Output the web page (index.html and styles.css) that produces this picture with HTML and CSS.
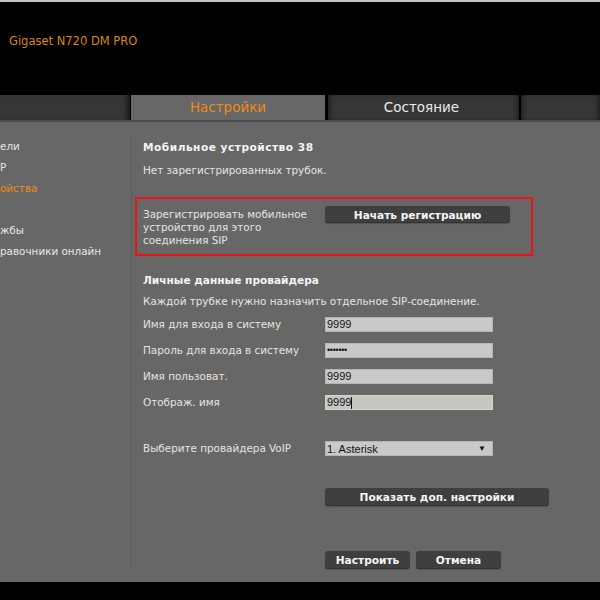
FILE: index.html
```html
<!DOCTYPE html>
<html lang="ru">
<head>
<meta charset="utf-8">
<title>Gigaset N720 DM PRO</title>
<link rel="stylesheet" href="styles.css">
</head>
<body>
<div class="page">
  <div class="topline"></div>
  <header class="header"><span class="brand">Gigaset N720 DM PRO</span></header>
  <nav class="tabs">
    <div class="tab tab-dark tab-first"></div>
    <div class="tab tab-active">Настройки</div>
    <div class="tab tab-dark tab-status">Состояние</div>
    <div class="tab tab-dark tab-last"></div>
  </nav>
  <div class="tabline"></div>
  <main class="content">
    <aside class="sidebar">
      <div class="menu-item">ели</div>
      <div class="menu-item">P</div>
      <div class="menu-item menu-active">ойства</div>
      <div class="menu-item"></div>
      <div class="menu-item">жбы</div>
      <div class="menu-item">равочники онлайн</div>
    </aside>
    <section class="form">
      <h2 class="title title-device">Мобильное устройство 38</h2>
      <p class="text">Нет зарегистрированных трубок.</p>
      <div class="register-box">
        <div class="register-label">Зарегистрировать мобильное устройство для этого соединения SIP</div>
        <button class="btn btn-register">Начать регистрацию</button>
      </div>
      <h2 class="title title-provider">Личные данные провайдера</h2>
      <p class="text text-note">Каждой трубке нужно назначить отдельное SIP-соединение.</p>
      <div class="fields">
        <label class="label">Имя для входа в систему</label>
        <div class="input">9999</div>
        <label class="label">Пароль для входа в систему</label>
        <div class="input input-pass">•••••••</div>
        <label class="label">Имя пользоват.</label>
        <div class="input">9999</div>
        <label class="label">Отображ. имя</label>
        <div class="input input-focus">9999<span class="caret"></span></div>
      </div>
      <div class="fields fields-select">
        <label class="label">Выберите провайдера VoIP</label>
        <div class="select"><span>1. Asterisk</span><span class="arrow">▼</span></div>
      </div>
      <div class="actions-more">
        <button class="btn btn-more">Показать доп. настройки</button>
      </div>
      <div class="actions">
        <button class="btn btn-small">Настроить</button>
        <button class="btn btn-small">Отмена</button>
      </div>
    </section>
  </main>
  <footer class="bottom"></footer>
</div>
</body>
</html>
```

FILE: styles.css
```css
* { box-sizing: border-box; }
html, body { margin: 0; padding: 0; background: #000; }
body {
  font-family: "DejaVu Sans", Verdana, sans-serif;
  font-size: 10.4px;
  color: #e4e4e4;
  width: 600px;
  height: 600px;
  overflow: hidden;
}
.page { display: flex; flex-direction: column; width: 600px; height: 600px; }
.topline { height: 2px; background: #c4c4c4; }
.header {
  height: 93px;
  background: #000;
  padding: 32px 0 0 9px;
}
.brand {
  font-size: 11.5px;
  color: #d9870f;
}
.tabs {
  display: flex;
  height: 25px;
  background: #000;
}
.tab {
  height: 25px;
  line-height: 24px;
  font-size: 13.5px;
  text-align: center;
}
.tab-dark {
  background: #363636;
  box-shadow: inset -4px 0 4px -2px #1e1e1e, inset 4px 0 4px -2px #1e1e1e;
  color: #ececec;
}
.tab-first { width: 130px; margin-right: 1px; box-shadow: inset -6px 0 5px -3px #1a1a1a; }
.tab-active { width: 194px; background: #676767; color: #f08a14; margin-right: 3px; }
.tab-status { width: 191px; margin-right: 2px; padding-right: 4px; }
.tab-last { flex: 1; }
.tabline { height: 2px; background: #4a4a4a; }
.content {
  display: flex;
  height: 460px;
  background: #676767;
}
.sidebar {
  width: 132px;
  border-right: 1px solid #5c5c5c;
  margin: 13px 0 14px;
  padding-top: 5px;
}
.menu-item {
  height: 21px;
  line-height: 13px;
  color: #e6e6e6;
  white-space: nowrap;
}
.menu-active { color: #f08a14; }
.form {
  flex: 1;
  padding: 19px 0 0 11px;
}
.title {
  margin: 0;
  font-size: 10.6px;
  font-weight: bold;
  line-height: 13px;
  color: #f4f4f4;
}
.title-device { letter-spacing: 0.5px; }
.text {
  margin: 10px 0 0;
  line-height: 13px;
}
.register-box {
  display: flex;
  align-items: flex-start;
  width: 398px;
  height: 59px;
  margin: 20px 0 0 -8px;
  padding: 7px 0 0 6px;
  border: 2px solid #e8141a;
}
.register-label {
  width: 182px;
  padding-right: 14px;
  line-height: 13px;
  margin-top: 2px;
}
.btn {
  font-family: "DejaVu Sans", Verdana, sans-serif;
  font-size: 10.6px;
  font-weight: bold;
  color: #f4f4f4;
  background: #3f3f3f;
  border: none;
  border-radius: 3px;
  box-shadow: 0 1px 1px #545454, inset 0 -1px 0 #333;
  padding: 0;
  text-align: center;
  cursor: pointer;
}
.btn-register { width: 185px; height: 17px; }
.title-provider { margin-top: 18px; }
.text-note { margin-top: 8px; }
.fields {
  display: grid;
  grid-template-columns: 182px 168px;
  grid-auto-rows: 15px;
  row-gap: 11px;
  align-items: center;
  margin-top: 9px;
}
.label { line-height: 13px; white-space: nowrap; }
.input {
  height: 15px;
  background: #c9c9c9;
  border: 1px solid #b4b4b4;
  font-family: "Liberation Sans", Arial, sans-serif;
  font-size: 11px;
  line-height: 13px;
  color: #111;
  padding-left: 1px;
  display: flex;
  align-items: center;
}
.input-pass { font-size: 9px; letter-spacing: -0.3px; }
.input-focus { border-color: #d4d8b8; background: #c6c6c6; }
.caret { display: inline-block; width: 1px; height: 12px; background: #111; }
.fields-select { margin-top: 31px; }
.select {
  height: 15px;
  background: #c9c9c9;
  border: 1px solid #b4b4b4;
  font-family: "Liberation Sans", Arial, sans-serif;
  font-size: 11px;
  color: #111;
  padding: 0 6px 0 1px;
  display: flex;
  align-items: center;
  justify-content: space-between;
}
.arrow { font-size: 8px; }
.actions-more { margin: 32px 0 0 182px; }
.btn-more { width: 224px; height: 18px; }
.actions { display: flex; gap: 6px; margin: 45px 0 0 182px; }
.btn-small { width: 85px; height: 18px; }
.bottom { flex: 1; background: #000; }
```
